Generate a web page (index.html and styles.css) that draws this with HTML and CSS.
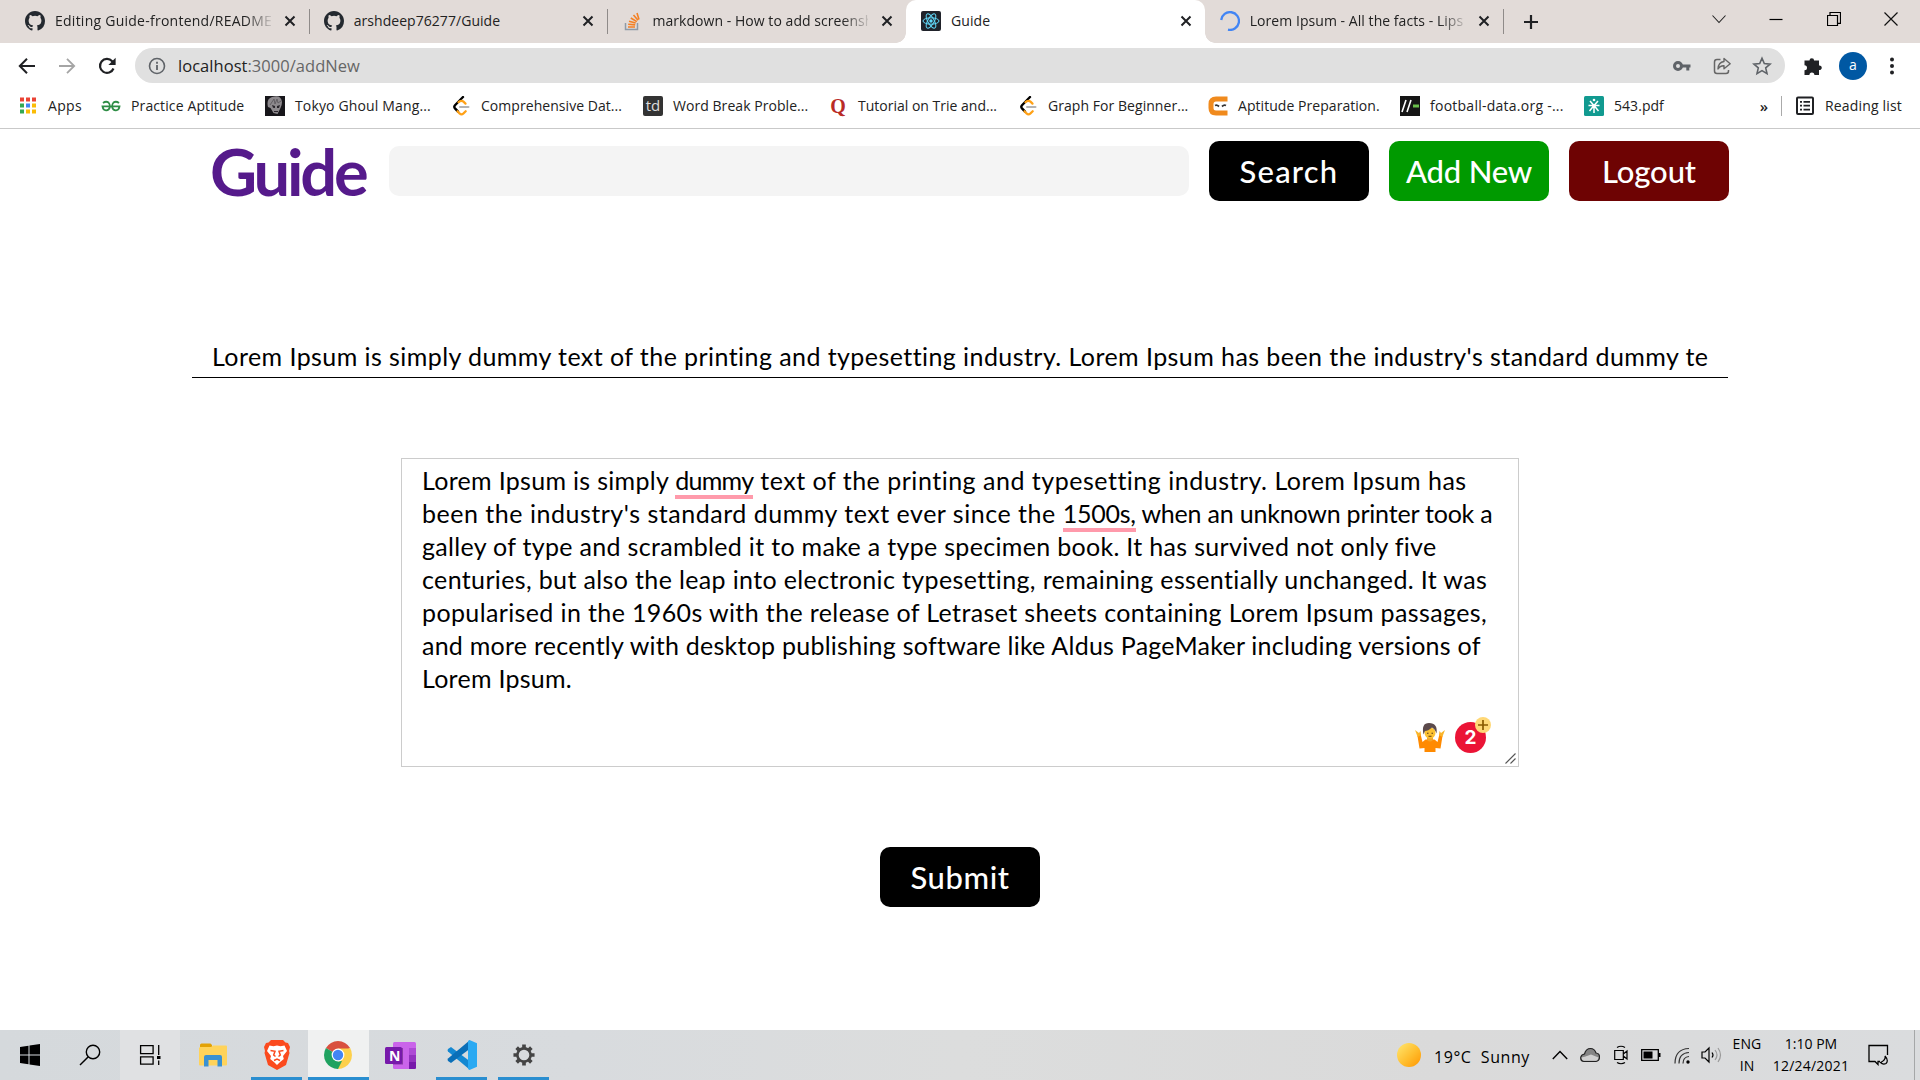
FILE: index.html
```html
<!DOCTYPE html>
<html lang="en">
<head>
<meta charset="utf-8">
<title>Guide</title>
<link rel="stylesheet" href="styles.css">
</head>
<body>
<svg class="defs" width="0" height="0">
  <symbol id="github" viewBox="0 0 16 16"><path fill="#24292f" d="M8 0C3.58 0 0 3.58 0 8c0 3.54 2.29 6.53 5.47 7.59.4.07.55-.17.55-.38 0-.19-.01-.82-.01-1.49-2.01.37-2.53-.49-2.69-.94-.09-.23-.48-.94-.82-1.13-.28-.15-.68-.52-.01-.53.63-.01 1.08.58 1.23.82.72 1.21 1.87.87 2.33.66.07-.52.28-.87.51-1.07-1.78-.2-3.64-.89-3.64-3.95 0-.87.31-1.59.82-2.15-.08-.2-.36-1.02.08-2.12 0 0 .67-.21 2.2.82a7.6 7.6 0 0 1 4 0c1.53-1.04 2.2-.82 2.2-.82.44 1.1.16 1.92.08 2.12.51.56.82 1.27.82 2.15 0 3.07-1.87 3.75-3.65 3.95.29.25.54.73.54 1.48 0 1.07-.01 1.93-.01 2.2 0 .21.15.46.55.38A8 8 0 0 0 16 8c0-4.42-3.58-8-8-8z"/></symbol>
  <symbol id="x" viewBox="0 0 12 12"><path d="M1.5 1.500l9 9M10.500 1.500l-9 9" stroke="#202124" stroke-width="2" fill="none"/></symbol>
  <symbol id="leet" viewBox="0 0 20 20"><path d="M12 1L4 9.200q-1.400 1.600 0 3.200L7 15.600" fill="none" stroke="#000" stroke-width="2.400" stroke-linecap="round"/><path d="M6.500 15.200l2 2.200q2 1.800 4 0l2.200-2.200M7.500 6.200l1.400-1q2-1 3.600.4l2 2" fill="none" stroke="#ffa116" stroke-width="2.200" stroke-linecap="round"/><path d="M9 11h8.500" stroke="#b3b3b3" stroke-width="2" stroke-linecap="round"/></symbol>
</svg>
<div class="tabs">
  <div class="tab"><svg width="20" height="20"><use href="#github"/></svg><span class="label fade first">Editing Guide-frontend/README.</span><svg width="12" height="12"><use href="#x"/></svg></div>
  <div class="tab"><svg width="20" height="20"><use href="#github"/></svg><span class="label">arshdeep76277/Guide</span><svg width="12" height="12"><use href="#x"/></svg></div>
  <div class="tab last"><svg width="20" height="20" viewBox="0 0 20 20"><path d="M3.500 12v6.500h12V12" fill="none" stroke="#8f9aa6" stroke-width="1.500"/><path d="M6 16h7M6.200 13.200l7 .7M7 10.200l6.700 1.900M8.800 7l6 3.600M11.500 4l4.500 5.300M15 2l2 6.500" stroke="#f48024" stroke-width="1.600"/></svg><span class="label fade">markdown - How to add screensh</span><svg width="12" height="12"><use href="#x"/></svg></div>
  <div class="tab active"><svg width="20" height="20" viewBox="0 0 20 20"><rect width="20" height="20" rx="2" fill="#20232a"/><g fill="none" stroke="#61dafb" stroke-width="1"><ellipse cx="10" cy="10" rx="8" ry="3.200"/><ellipse cx="10" cy="10" rx="8" ry="3.200" transform="rotate(60 10 10)"/><ellipse cx="10" cy="10" rx="8" ry="3.200" transform="rotate(120 10 10)"/></g><circle cx="10" cy="10" r="1.700" fill="#61dafb"/></svg><span class="label">Guide</span><svg width="12" height="12"><use href="#x"/></svg></div>
  <div class="tab"><svg width="20" height="20" viewBox="0 0 20 20"><path d="M1.200 9A8.900 8.900 0 1 1 8 18.700" fill="none" stroke="#4285f4" stroke-width="2.300"/></svg><span class="label fade">Lorem Ipsum - All the facts - Lips</span><svg width="12" height="12"><use href="#x"/></svg></div>
  <svg class="plus" width="16" height="16"><path d="M8 1v14M1 8h14" stroke="#202124" stroke-width="2.200"/></svg>
  <div class="winbtns">
    <svg width="14" height="14"><path d="M.5 3.500l6.500 7 6.500-7" fill="none" stroke="#222" stroke-width="1.100"/></svg>
    <svg width="14" height="14"><path d="M.5 7.500h13" stroke="#000" stroke-width="1.200"/></svg>
    <svg width="14" height="14"><path d="M.5 3.500h10v10H.500zM3 3.500v-3h10.500v10.800H10.500" fill="none" stroke="#000" stroke-width="1.200"/></svg>
    <svg width="14" height="14"><path d="M.5.5l13 13M13.500.500l-13 13" stroke="#111" stroke-width="1.200"/></svg>
  </div>
</div>
<div class="toolbar">
  <div class="nav">
    <svg width="18" height="18" viewBox="0 0 18 18"><path d="M17 9H2M9 1.800L1.800 9 9 16.200" fill="none" stroke="#202124" stroke-width="2"/></svg>
    <svg width="18" height="18" viewBox="0 0 18 18"><path d="M1 9h15M9 1.800L16.200 9 9 16.200" fill="none" stroke="#a5a5a5" stroke-width="1.800"/></svg>
    <svg width="18" height="18" viewBox="0 0 18 18"><path d="M15.500 11.500A7 7 0 1 1 14.200 4.200L16 6" fill="none" stroke="#202124" stroke-width="2.200"/><path d="M17.600.8V8h-7.200z" fill="#202124"/></svg>
  </div>
  <div class="omnibox">
    <svg width="18" height="18" viewBox="0 0 18 18"><circle cx="9" cy="9" r="7.500" fill="none" stroke="#5f6368" stroke-width="1.600"/><path d="M9 8v5M9 4.800v1.900" stroke="#5f6368" stroke-width="1.800"/></svg>
    <span class="url">localhost<i>:3000/addNew</i></span>
    <div class="omni-icons">
      <svg width="20" height="20" viewBox="0 0 20 20"><circle cx="6" cy="10" r="3.500" fill="none" stroke="#5f6368" stroke-width="3"/><path d="M9 8.600h9.500v2.800h-1.200v3h-3v-3H9z" fill="#5f6368"/></svg>
      <svg width="20" height="20" viewBox="0 0 20 20"><path d="M8.500 3.500H5q-2.500 0-2.500 2.500v9Q2.500 17.500 5 17.500h9q2.500 0 2.500-2.500v-1" fill="none" stroke="#666" stroke-width="1.500"/><path d="M12 2.500l6.200 5.200-6.200 5v-3q-4-.2-6 3.300.3-6.700 6-7.500z" fill="none" stroke="#666" stroke-width="1.400" stroke-linejoin="round"/></svg>
      <svg width="20" height="20" viewBox="0 0 20 20"><path d="M10 2.200l2.300 5.400 5.800.5-4.400 3.800 1.300 5.700-5-3-5 3 1.300-5.700L1.900 8.100l5.800-.5z" fill="none" stroke="#5f6368" stroke-width="1.600"/></svg>
    </div>
  </div>
  <svg class="puzzle" width="20" height="20" viewBox="0 0 20 20"><path fill="#202124" d="M1.500 4.500h5a2.300 2.300 0 1 1 4.600 0h4.900v5a2.300 2.300 0 1 1 0 4.500v5h-4.600a2.500 2.500 0 0 0-5 0H1.500v-4.700a2.500 2.500 0 0 0 0-5z"/></svg>
  <span class="avatar">a</span>
  <svg width="6" height="20"><g fill="#202124"><circle cx="3" cy="3.500" r="2"/><circle cx="3" cy="10" r="2"/><circle cx="3" cy="16.500" r="2"/></g></svg>
</div>
<div class="bookmarks">
  <div class="bm b1"><svg width="20" height="20" viewBox="0 0 20 20"><path fill="#ea4335" d="M2 1.500h4v4H2zM8 1.500h4v4H8zM14 1.500h4v4h-4z"/><path fill="#34a853" d="M2 7.500h4v4H2zM2 13.500h4v4H2z"/><path fill="#4285f4" d="M8 7.500h4v4H8z"/><path fill="#fbbc05" d="M14 7.500h4v4h-4zM8 13.500h4v4H8zM14 13.500h4v4h-4z"/></svg><span>Apps</span></div>
  <div class="bm b2"><svg width="20" height="20" viewBox="0 0 20 20"><path d="M2 7q3-2.300 5.500-.5 1.800 2 1.400 4.500Q8 14.500 5 14.300 2 14 1.500 10.300H18.500Q18 14 15 14.300 12 14.500 11.100 11q-.4-2.500 1.400-4.500Q15 4.700 18 7" fill="none" stroke="#2f8d46" stroke-width="1.800"/></svg><span>Practice Aptitude</span></div>
  <div class="bm b3"><svg width="20" height="20" viewBox="0 0 20 20"><rect width="20" height="20" fill="#17161a"/><path d="M3 11Q1 3 7 1q9-3 10 5 0 3-1.500 6l-3 6-4-1-3-5z" fill="#8d898d"/><path d="M7 9l3 1v2l-2-.3zM12 10l3-1-1 3h-2zM9 15h4v1H9z" fill="#28242a"/><path d="M5 9l4-6 1 5 2-5 1 4 3-2" fill="none" stroke="#625e63"/></svg><span>Tokyo Ghoul Mang...</span></div>
  <div class="bm b4"><svg width="20" height="20"><use href="#leet"/></svg><span>Comprehensive Dat...</span></div>
  <div class="bm b5"><b class="td">td</b><span>Word Break Proble...</span></div>
  <div class="bm b6"><b class="q">Q</b><span>Tutorial on Trie and...</span></div>
  <div class="bm b7"><svg width="20" height="20"><use href="#leet"/></svg><span>Graph For Beginner...</span></div>
  <div class="bm b8"><svg width="20" height="20" viewBox="0 0 20 20"><path d="M19.500 3H8Q3 3 3 8v4q0 5 5 5h11.500" fill="none" stroke="#f08a1d" stroke-width="5"/><path d="M7 9.500q2-1 4 1M14 10.500q2-2 4-1" fill="none" stroke="#333" stroke-width="1.800"/></svg><span>Aptitude Preparation.</span></div>
  <div class="bm b9"><svg width="20" height="20" viewBox="0 0 20 20"><rect width="20" height="20" fill="#151515"/><path d="M2 16L6 4M7 16l4-12" stroke="#fff" stroke-width="1.600"/><path d="M13 10h6" stroke="#6abf4b" stroke-width="3"/></svg><span>football-data.org -...</span></div>
  <div class="bm b10"><svg width="20" height="20" viewBox="0 0 20 20"><rect width="20" height="20" rx="1.500" fill="#119a90"/><path d="M10 9v8M4.500 9.500h11M5.500 15L10 9.500l4.500 5.500M6 5l4 4.500L14 5" fill="none" stroke="#fff" stroke-width="1.500"/><circle cx="10" cy="4" r="1.300" fill="#fff"/></svg><span>543.pdf</span></div>
  <span class="more">»</span>
  <div class="bm reading"><svg width="20" height="20" viewBox="0 0 20 20"><rect x="2" y="1.500" width="16" height="16.500" rx="1" fill="none" stroke="#202124" stroke-width="2"/><path d="M5 5.800h2M8.500 5.800H15M5 9.700h2M8.500 9.700H15M5 13.600h2M8.500 13.600H15" stroke="#202124" stroke-width="1.700"/></svg><span>Reading list</span></div>
</div>
<main>
  <header>
    <h1>Guide</h1>
    <div class="search"></div>
    <div class="btn black search-btn">Search</div>
    <div class="btn green">Add New</div>
    <div class="btn red">Logout</div>
  </header>
  <div class="title-input"><div class="clip">Lorem Ipsum is simply dummy text of the printing and typesetting industry. Lorem Ipsum has been the industry's standard dummy text</div></div>
  <div class="textarea">
    <div class="ln l1">Lorem Ipsum is simply <u>dummy</u><span> text of the printing and typesetting industry. Lorem Ipsum has</span></div>
    <div class="ln l2">been the industry's standard dummy text ever since the <u>1500s,</u><span> when an unknown printer took a</span></div>
    <div class="ln l3">galley of type and scrambled it to make a type specimen book. It has survived not only five</div>
    <div class="ln l4">centuries, but also the leap into electronic typesetting, remaining essentially unchanged. It was</div>
    <div class="ln l5">popularised in the 1960s with the release of Letraset sheets containing Lorem Ipsum passages,</div>
    <div class="ln l6">and more recently with desktop publishing software like Aldus PageMaker including versions of</div>
    <div class="ln l7">Lorem Ipsum.</div>
    <div class="checker">
      <svg width="30" height="30" viewBox="0 0 30 30"><path d="M2.500 13l3-2 2 8 3-2.500h9l3 2.500 2-8 3 2-2 12.500-5-.5v4h-11v-4l-5 .5z" fill="#ff8a00"/><path d="M0 7l4 3 1.500-2 .5 4-3.300 2zM30 7l-4 3-1.500-2-.5 4 3.300 2z" fill="#f9b52c"/><path d="M12 14h6v3q-3 3-6 0z" fill="#f2a52a"/><circle cx="15" cy="10" r="5.500" fill="#fcc232"/><path d="M8.500 11.500Q6 0 14 0q9 0 7.500 10.500Q20 6 17 4.500 13 8 10 8z" fill="#5b4a4b"/><path d="M12 10.300h1.500M16.500 10.300H18M13.500 13.300h3" stroke="#5b3a1b" stroke-width="1.100"/></svg>
      <span class="count">2<span class="premium"><svg width="16" height="16"><path d="M8 3v10M3 8h10" stroke="#8a5a00" stroke-width="1.700"/></svg></span></span>
    </div>
    <svg class="grip" width="11" height="11"><path d="M.5 10.500l10-10M5.500 10.500l5-5" stroke="#555" stroke-width="1.100"/></svg>
  </div>
  <div class="btn black submit">Submit</div>
</main>
<footer>
  <div class="tile"><svg width="20" height="22" viewBox="0 0 20 22"><path d="M0 3l8.500-1.300v8.800H0zM9.500 1.500L20 0v10.500H9.500zM0 11.500h8.500v8.800L0 19zM9.500 11.500H20V22L9.500 20.500z"/></svg></div>
  <div class="tile"><svg width="22" height="22" viewBox="0 0 22 22"><circle cx="14" cy="8" r="6.700" fill="none" stroke="#000" stroke-width="1.400"/><path d="M9.300 12.800L1 21" stroke="#000" stroke-width="1.500"/></svg></div>
  <div class="tile lit"><svg width="22" height="22" viewBox="0 0 22 22"><path d="M1.600 1.600h12.500v8H1.600zM1.600 12.800h12.500v7.400H1.600z" fill="none" stroke="#000" stroke-width="1.300"/><path d="M19.700 1v10M19.700 16.500V21" stroke="#000" stroke-width="1.300"/><path d="M18 12h3.500v3H18z"/></svg></div>
  <div class="tile explorer"><svg width="28" height="26" viewBox="0 0 28 26"><path d="M1 3q0-1.500 1.500-1.500h9L13 3v2H1z" fill="#e3a205"/><path d="M1 5h11l2-1.500h13q1 0 1 1V22.500q0 1-1 1H1q-1 0-1-1V6z" fill="#ffd35a"/><path d="M5 24.500V15q0-2 2-2h14q2 0 2 2v9.500h-4.500V18h-9v6.500z" fill="#3a91d2"/></svg></div>
  <div class="tile app run"><svg width="26" height="30" viewBox="0 0 26 30"><path d="M7 0h12l2.500 2.500L24 3l2 4-1 4 .5 2-3.500 12L13 30l-9-5L.5 13l.5-2-1-4 2-4 2.500-.5z" fill="#fb4a1e"/><path d="M5.500 5.500l4 .7L13 5.500l3.500.7 4-.7L23 11l-4 5 .8 3-4 3.200L13 25l-2.800-2.800-4-3.200.8-3L3 11z" fill="#fff"/><path d="M6.500 10.500l4.500.8-1.300 3.700 1.800 1.500M19.500 10.500l-4.500.8 1.300 3.700-1.800 1.500M10 20.500L13 19l3 1.500" fill="none" stroke="#fb4a1e" stroke-width="1.500"/></svg></div>
  <div class="tile chrome"><svg width="28" height="28" viewBox="0 0 28 28"><path d="M14 14L1.900 7A14 14 0 0 1 26.100 7z" fill="#d9503f"/><path d="M14 14L26.100 7A14 14 0 0 1 14 28z" fill="#fdd04b"/><path d="M14 14v14A14 14 0 0 1 1.900 7z" fill="#1fa260"/><path d="M14 7.500h12.400l-6 10L14 28l5.600-10.700z" fill="#fdd04b"/><path d="M1.900 7L8.400 17.200 14 20.500l4-.5L14 28Q12 20 8 17z" fill="#1fa260"/><circle cx="14" cy="14" r="6.400" fill="#fff"/><circle cx="14" cy="14" r="5.200" fill="#4285f4"/></svg></div>
  <div class="tile onenote"><svg width="31" height="27" viewBox="0 0 31 27"><rect x="8" y="0" width="23" height="27" rx="1.500" fill="#ca64ea"/><path d="M24 6h7v7h-7z" fill="#ae4bd5"/><path d="M24 13h7v7h-7z" fill="#9332bf"/><path d="M24 20h7v5.500q0 1.500-1.500 1.500H24z" fill="#7719aa"/><path d="M8 6h10v16.500H8z" fill="#8b3aa8"/><rect y="5" width="17" height="17" rx="1.500" fill="#7719aa"/></svg><b>N</b></div>
  <div class="tile app run vs"><svg width="30" height="30" viewBox="0 0 30 30"><path d="M1 9l3-2L22.500 21v8.500L1 11.500q-1-1.300 0-2.500z" fill="#1488d2"/><path d="M1 21l3 2L22.500 9V.5L1 18.500q-1 1.300 0 2.500z" fill="#0a6fb8"/><path d="M22.500 0L30 3.300v23.400L22.500 30l-1.500-1V1z" fill="#2aa9f2"/></svg></div>
  <div class="tile app run"><svg width="22" height="22" viewBox="0 0 24 24"><circle cx="12" cy="12" r="7.200" fill="none" stroke="#444" stroke-width="2.800"/><path d="M12 5V.500M12 19v4.500M5 12H.500M19 12h4.500M7 7L4 4M17 17l3 3M7 17l-3 3M17 7l3-3" stroke="#444" stroke-width="4"/></svg></div>
  <div class="tray">
    <span class="sun"></span><span class="weather">19°C&nbsp; Sunny</span>
    <svg width="16" height="10"><path d="M.8 9L8 1.500 15.200 9" fill="none" stroke="#000" stroke-width="1.400"/></svg>
    <svg class="cloud" width="20" height="16" viewBox="0 0 20 16"><path d="M4 14.500q-3.500-.5-3.300-4Q1.200 7.500 4.500 7 6 1.500 10.500 1.500q4 0 5.500 4.500 3.500.5 3.500 4 0 4-3.500 4.500z" fill="#858585" stroke="#222" stroke-width="1.200"/><path d="M1.500 10.500l4-1 5.500-2 7.500 3Q18 13.500 16 13.700H4Q1.500 13 1.500 10.500z" fill="#d0d0d0"/></svg>
    <svg class="cam" width="14" height="20" viewBox="0 0 14 20"><path d="M.700 5.500h8.600v9H.700zM9.300 9l3.700-3v8l-3.700-3M3 2.500q4-2.500 8 0M3 17.500q4 2.500 8 0" fill="none" stroke="#000" stroke-width="1.200"/></svg>
    <svg class="bat" width="20" height="12"><path d="M.7.7h16.600v10.600H.7z" fill="none" stroke="#000" stroke-width="1.300"/><path d="M2.500 2.500h9v7h-9zM17.500 4h2v4h-2z"/></svg>
    <svg class="wifi" width="16" height="17" viewBox="0 0 16 17"><path d="M1 16.500Q1 2 15 1.500M5 16.500Q5 6 15 5.500M9 16.500Q9 10 15 9.500" fill="none" stroke="#333" stroke-width="1.200"/><circle cx="14" cy="15" r="1.700"/></svg>
    <svg class="vol" width="21" height="18" viewBox="0 0 21 18"><path d="M1 6h3l4-4v14l-4-4H1z" fill="none" stroke="#000" stroke-width="1.200"/><path d="M11 6.500q2 2.500 0 5" fill="none" stroke="#000" stroke-width="1.200"/><path d="M14 4q4 5 0 10M17 2q5 7 0 14" fill="none" stroke="#999" stroke-width="1.200"/></svg>
    <span class="two lang">ENG<br>IN</span>
    <span class="two clock">1:10 PM<br><span>12/24/2021</span></span>
    <svg class="notif" width="21" height="22" viewBox="0 0 21 22"><path d="M19.500 11V1.500H1v16h6l3 3v-3h2" fill="none" stroke="#000" stroke-width="1.300"/><path d="M17 12q1 4-4.500 6.500Q15 21 18 19.500 21 16.500 17 12z" fill="none" stroke="#000" stroke-width="1.200"/></svg>
  </div>
</footer>
</body>
</html>
```
FILE: styles.css
```css
* { box-sizing: border-box; }
body { margin: 0; width: 1920px; height: 1080px; overflow: hidden; background: #fff; color: #222; font: 14px "Open Sans", sans-serif; display: flex; flex-direction: column; }
svg { flex: none; display: block; }
.defs { position: absolute; }

.tabs { flex: none; height: 43px; background: #e2dbd8; display: flex; align-items: center; padding-left: 10px; }
.tab { position: relative; width: 298.700px; height: 43px; display: flex; align-items: center; padding: 0 13px 2px 15px; gap: 10px; flex: none; }
.tab:not(.last):not(.active)::after { content: ""; position: absolute; right: -1px; top: 9px; width: 1px; height: 25px; background: #8f8b89; }
.label { flex: 1; white-space: nowrap; overflow: hidden; margin-right: 3px; letter-spacing: .05px; }
.first { letter-spacing: .25px; }
.fade { -webkit-mask-image: linear-gradient(90deg, #000 88%, transparent 102%); mask-image: linear-gradient(90deg, #000 88%, transparent 102%); }
.active { background: #fff; border-radius: 10px 10px 0 0; }
.active::before, .active::after { content: ""; position: absolute; bottom: 0; width: 10px; height: 10px; }
.active::before { left: -10px; background: radial-gradient(circle at 0 0, #e2dbd8 9.5px, #fff 10px); }
.active::after { right: -10px; background: radial-gradient(circle at 100% 0, #e2dbd8 9.5px, #fff 10px); }
.plus { margin-left: 20px; }
.winbtns { margin: 0 22px 5px auto; display: flex; gap: 43.500px; }

.toolbar { flex: none; height: 45px; display: flex; align-items: center; padding-right: 25px; }
.nav { width: 135px; display: flex; gap: 22px; padding-left: 18px; }
.omnibox { width: 1650px; height: 35px; background: #e0e0e0; border-radius: 18px; display: flex; align-items: center; padding: 0 13px 0 13px; }
.url { font-size: 16.500px; margin-left: 12px; letter-spacing: .04px; }
.url i { font-style: normal; color: #666; }
.omni-icons { margin-left: auto; display: flex; gap: 20px; }
.puzzle { margin-left: 18px; }
.avatar { margin: 0 auto 0 16px; width: 28px; height: 28px; border-radius: 50%; background: #0058a3; color: #fff; font-size: 14px; line-height: 26px; text-align: center; }

.bookmarks { flex: none; height: 41px; border-bottom: 1px solid #c9c9c9; display: flex; align-items: center; padding: 0 18px 5px 18px; }
.bm { display: flex; align-items: center; gap: 10px; white-space: nowrap; letter-spacing: .05px; }
.b1 { width: 83px; letter-spacing: .33px; }
.b2 { width: 164px; letter-spacing: .12px; }
.b3 { width: 186px; letter-spacing: .15px; }
.b4 { width: 192px; }
.b5 { width: 185px; }
.b6 { width: 190px; letter-spacing: 0; }
.b7 { width: 190px; }
.b8 { width: 192px; }
.b9 { width: 184px; letter-spacing: .25px; }
.td { width: 20px; height: 20px; border-radius: 2px; background: #333; color: #ddd; font: 15px/19px "Open Sans", sans-serif; text-align: center; }
.q { width: 20px; color: #b92b27; font: bold 20px/20px "Liberation Serif", serif; text-align: center; }
.more { margin-left: auto; font-weight: 600; font-size: 15px; line-height: 20px; padding-right: 13px; border-right: 1px solid #aaa; }
.reading { margin-left: 13px; letter-spacing: .17px; }

main { flex: 1; display: flex; flex-direction: column; padding: 12px 191px 0; font-family: Lato, sans-serif; color: #000; }
header { display: flex; height: 60px; align-items: center; }
h1 { margin: 0; width: 198px; padding-left: 19px; font-size: 65px; line-height: 60px; letter-spacing: -3.2px; color: #551a8b; }
.search { width: 800px; height: 50px; margin: 0 20px 0 0; border-radius: 10px; background: #f4f4f4; }
.btn { width: 160px; height: 60px; margin-right: 20px; border-radius: 10px; color: #fff; font-size: 31px; font-weight: 500; line-height: 61px; text-align: center; white-space: nowrap; flex: none; }
.black { background: #000; }
.green { background: #009a00; letter-spacing: -.2px; }
.red { background: #6e0303; margin-right: 0; letter-spacing: -.1px; }
.search-btn { letter-spacing: 1.2px; }
.submit { margin: 80px auto 0; letter-spacing: .55px; }
.title-input { margin: 136px 0 0 1px; width: 1536px; height: 41px; padding: 0 20px; border-bottom: 1px solid #000; }
.clip { overflow: hidden; white-space: nowrap; font-size: 25px; line-height: 38px; letter-spacing: .43px; }
.textarea { position: relative; margin: 80px 0 0 210px; width: 1118px; height: 309px; border: 1px solid #ccc; padding: 5px 20px; flex: none; }
.ln { height: 33px; font-size: 25px; line-height: 33px; white-space: nowrap; }
.ln u { text-decoration: none; box-shadow: 0 4px #ff9aab; }
.l1 { letter-spacing: .3px; }
.l1 u { letter-spacing: -.7px; }
.l1 span { letter-spacing: .51px; }
.l2 { letter-spacing: .52px; }
.l2 u { letter-spacing: -.25px; }
.l2 span { letter-spacing: -.2px; }
.l3 { letter-spacing: .314px; }
.l4 { letter-spacing: .361px; }
.l5 { letter-spacing: .376px; }
.l6 { letter-spacing: .247px; }
.l7 { letter-spacing: .258px; }
.checker { position: absolute; right: 32px; bottom: 13px; display: flex; align-items: center; gap: 10px; }
.count { position: relative; width: 31px; height: 31px; border-radius: 50%; background: #eb1436; color: #fff; font: bold 19px/31px Inter, sans-serif; text-align: center; }
.premium { position: absolute; right: -5px; top: -5px; width: 16px; height: 16px; border-radius: 50%; background: #ffd876; }
.grip { position: absolute; right: 2px; bottom: 2px; }

footer { flex: none; height: 50px; display: flex; background: linear-gradient(90deg, #d5d9dc 0, #d8dbde 30%, #dcdddd 50%, #dadada 75%, #dadcde 100%); }
.tile { position: relative; width: 60px; height: 50px; flex: none; display: flex; align-items: center; justify-content: center; }
.tile:first-child { padding-right: 1px; }
.lit { background: #e0e1e3; }
.explorer { width: 66px; }
.app { width: 62px; }
.run { padding-right: 1px; }
.vs { padding: 0; }
.run::after { content: ""; position: absolute; left: 5px; right: 6px; bottom: 0; height: 3px; background: #2a8ed0; }
.chrome { width: 61px; background: #f0f1f1; border-bottom: 3px solid #2a8ed0; padding: 3px 1px 0 0; }
.onenote { width: 62px; }
.onenote b { position: absolute; left: 20px; top: 17px; font-size: 14px; line-height: 17px; color: #fff; }
.tray { position: relative; margin-left: auto; width: 523px; display: flex; align-items: center; color: #000; }
.tray::after { content: ""; position: absolute; right: 5px; top: 0; width: 1px; height: 50px; background: #a5a7a8; }
.sun { width: 24px; height: 24px; border-radius: 50%; background: linear-gradient(135deg, #ffe066 10%, #ffbe2e 55%, #ff9500); }
.weather { margin-left: 13px; width: 118px; font-size: 16px; padding-top: 3px; white-space: nowrap; letter-spacing: .55px; }
.cloud { margin-left: 12px; }
.cam { margin-left: 14px; }
.bat { margin-left: 13px; }
.wifi { margin-left: 13px; }
.vol { margin-left: 11px; }
.two { text-align: center; font-size: 14px; line-height: 22.500px; white-space: nowrap; }
.lang { margin-left: 8px; width: 34px; letter-spacing: .1px; }
.clock { margin-left: 6px; width: 82px; }
.clock span { letter-spacing: .2px; }
.notif { margin-left: 16px; }
```
